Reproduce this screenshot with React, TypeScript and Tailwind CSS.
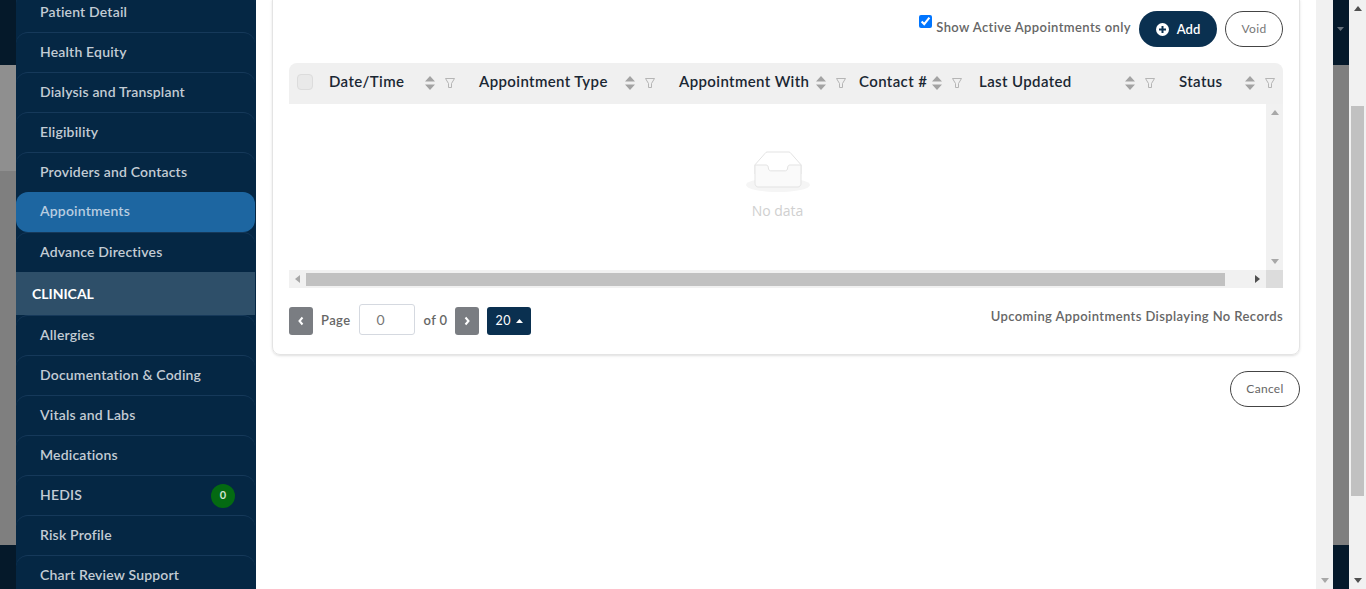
import React from "react";

const font = "font-['Lato','Liberation_Sans',sans-serif]";

const topItems = [
    "Patient Detail",
    "Health Equity",
    "Dialysis and Transplant",
    "Eligibility",
    "Providers and Contacts",
    "Appointments",
    "Advance Directives",
];

const clinicalItems = [
    "Allergies",
    "Documentation & Coding",
    "Vitals and Labs",
    "Medications",
    "HEDIS",
    "Risk Profile",
    "Chart Review Support",
];

const columns = [
    { label: "Date/Time", width: "w-[150px]", pad: "pl-[10px] pr-[14px]" },
    { label: "Appointment Type", width: "w-[200px]", pad: "pl-[10px] pr-[14px]" },
    { label: "Appointment With", width: "w-[181px]", pad: "pl-[10px] pr-[4px]" },
    { label: "Contact #", width: "w-[120px]", pad: "pl-[9px] pr-[10px]" },
    { label: "Last Updated", width: "w-[200px]", pad: "pl-[9px] pr-[15px]" },
    { label: "Status", width: "flex-1", pad: "pl-[9px] pr-[8px]" },
];

const SortIcon = () => (
    <svg width="10" height="14" viewBox="0 0 10 14" className="shrink-0">
        <path d="M5 0 L10 5.5 H0 Z M5 14 L0 8.5 H10 Z" fill="#a3a3a3" />
    </svg>
);

const FilterIcon = () => (
    <svg width="10" height="10" viewBox="0 0 10 10" fill="none" className="shrink-0 ml-[10px]">
        <path d="M0.5 0.5 H9.5 L6.5 5.5 V9.5 H3.5 V5.5 Z" stroke="#b5b5b5" strokeWidth="1" />
    </svg>
);

const Arrow = ({ dir, color }: { dir: "up" | "down" | "left" | "right"; color: string }) => {
    const d = {
        up: "M4 1 L8 6 H0 Z",
        down: "M4 7 L0 2 H8 Z",
        left: "M1 4 L6 0 V8 Z",
        right: "M7 4 L2 0 V8 Z",
    }[dir];
    return (
        <svg width="8" height="8" viewBox="0 0 8 8">
            <path d={d} fill={color} />
        </svg>
    );
};

const EmptyIcon = () => (
    <svg width="64" height="41" viewBox="0 0 64 41">
        <g transform="translate(0 1)" fill="none" fillRule="evenodd">
            <ellipse fill="#f5f5f5" cx="32" cy="33" rx="32" ry="7" />
            <g fillRule="nonzero" stroke="#e3e3e3">
                <path d="M55 12.76L44.854 1.258C44.367.474 43.656 0 42.907 0H21.093c-.749 0-1.46.474-1.947 1.257L9 12.761V22h46v-9.24z" />
                <path
                    d="M41.613 15.931c0-1.605.994-2.93 2.227-2.931H55v18.137C55 33.26 53.68 35 52.05 35h-40.1C10.32 35 9 33.259 9 31.137V13h11.16c1.233 0 2.227 1.323 2.227 2.928v.022c0 1.605 1.005 2.901 2.237 2.901h14.752c1.232 0 2.237-1.308 2.237-2.913v-.007z"
                    fill="#fafafa"
                />
            </g>
        </g>
    </svg>
);

const NavRow = ({ label }: { label: string }) => {
    const active = label === "Appointments";
    return (
        <div
            className={
                active
                    ? "h-10 flex items-center pl-6 pr-5 pb-1 rounded-xl bg-[#1d66a1] text-[#b9cde0] text-[14px] font-semibold tracking-[0.18px]"
                    : "h-10 flex items-center justify-between pl-6 pr-5 rounded-xl border-t border-[#16395a] text-[#c3ccd4] text-[14px] font-semibold tracking-[0.18px]"
            }
        >
            <span className={active ? "" : "-mt-0.5"}>{label}</span>
            {label === "HEDIS" && (
                <span className="w-6 h-6 rounded-full bg-[#046a12] text-[#cfe3cf] text-[11px] font-bold flex items-center justify-center">
                    0
                </span>
            )}
        </div>
    );
};

const PageButton = ({ children }: { children: React.ReactNode }) => (
    <button className="w-6 h-7 mt-[3px] rounded-[3px] bg-[#7a7d82] text-white flex items-center justify-center">
        {children}
    </button>
);

const Chevron = ({ left }: { left?: boolean }) => (
    <svg width="8" height="10" viewBox="0 0 8 10" fill="none">
        <path
            d={left ? "M5.5 1.5 L2.5 5 L5.5 8.5" : "M2.5 1.5 L5.5 5 L2.5 8.5"}
            stroke="white"
            strokeWidth="2"
        />
    </svg>
);

export default function App() {
    return (
        <div className={`${font} w-full h-[589px] flex overflow-hidden bg-white`}>
            {/* dimmed page behind the drawer, left */}
            <div className="w-4 shrink-0 flex flex-col">
                <div className="h-[65px] bg-[#05192a]" />
                <div className="h-[106px] bg-[#8f8f8f]" />
                <div className="flex-1 bg-[#7f7f7f]" />
                <div className="h-11 bg-[#05192a]" />
            </div>

            {/* sidebar */}
            <aside className="w-60 shrink-0 bg-[#052744] pr-px">
                <div className="-mt-2">
                    {topItems.map((item) => (
                        <NavRow key={item} label={item} />
                    ))}
                </div>
                <div className="h-[43px] flex items-center pl-4 bg-[#2e4f69] text-white text-[14px] font-bold">
                    CLINICAL
                </div>
                {clinicalItems.map((item) => (
                    <NavRow key={item} label={item} />
                ))}
            </aside>

            {/* main drawer content */}
            <main className="flex-1 min-w-0 px-4">
                <div className="-mt-px rounded-b-lg border border-[#e4e4e4] shadow-sm px-4 pt-[11px] pb-[19px]">
                    <div className="flex items-center justify-end h-9">
                        <label className="flex items-start gap-[4px] mr-2 -mt-[5px] text-[13px] font-semibold text-[#666] tracking-[0.4px]">
                            <input
                                type="checkbox"
                                defaultChecked
                                className="w-[13px] h-[13px] -mt-[3px] m-0 accent-[#0075ff]"
                            />
                            <span className="leading-[18px]">Show Active Appointments only</span>
                        </label>
                        <button className="w-[78px] h-9 pt-px rounded-full bg-[#0a3050] text-white text-[13px] font-semibold flex items-center justify-center gap-2">
                            <svg width="13" height="13" viewBox="0 0 13 13">
                                <circle cx="6.5" cy="6.5" r="6.5" fill="white" />
                                <path d="M6.5 3 V10 M3 6.5 H10" stroke="#0a3050" strokeWidth="2" />
                            </svg>
                            Add
                        </button>
                        <button className="w-[58px] h-9 ml-2 rounded-full border border-[#444] bg-white text-[#777] text-[12px] tracking-[0.3px]">
                            Void
                        </button>
                    </div>

                    {/* table */}
                    <div className="mt-4">
                        <div className="h-[41px] flex bg-[#f0f0f0] rounded-t-lg text-[15px] font-semibold text-[#1a2733] tracking-[0.38px]">
                            <div className="w-[30px] shrink-0 flex items-center pl-2">
                                <span className="w-4 h-4 -mt-[3px] rounded-[4px] border border-[#dcdcdc] bg-[#e9e9e9]" />
                            </div>
                            {columns.map((col) => (
                                <div
                                    key={col.label}
                                    className={`${col.width} ${col.pad} shrink-0 pb-[2px] flex items-center`}
                                >
                                    <span className="flex-1 whitespace-nowrap -mt-[2px] mr-[5px]">{col.label}</span>
                                    <SortIcon />
                                    <FilterIcon />
                                </div>
                            ))}
                        </div>
                        <div className="h-[166px] flex">
                            <div className="flex-1 flex flex-col items-center pt-[47px]">
                                <EmptyIcon />
                                <span className="mt-2 text-[14px] text-[#d0d0d0] font-['Open_Sans',sans-serif]">
                                    No data
                                </span>
                            </div>
                            <div className="w-[17px] bg-[#f1f1f1] flex flex-col items-center justify-between py-[5px]">
                                <Arrow dir="up" color="#a8a8a8" />
                                <Arrow dir="down" color="#a8a8a8" />
                            </div>
                        </div>
                        <div className="h-[18px] flex bg-[#f1f1f1]">
                            <div className="w-[17px] flex items-center justify-center">
                                <Arrow dir="left" color="#a8a8a8" />
                            </div>
                            <div className="w-[919px] h-[13px] mt-[3px] bg-[#c1c1c1]" />
                            <div className="flex-1 flex items-center justify-end pr-[5px]">
                                <Arrow dir="right" color="#505050" />
                            </div>
                            <div className="w-[17px] bg-[#dcdcdc]" />
                        </div>
                    </div>

                    {/* pagination */}
                    <div className="mt-4 flex items-start text-[13px] font-semibold text-[#666] tracking-[0.4px]">
                        <PageButton>
                            <Chevron left />
                        </PageButton>
                        <span className="ml-2 mt-[7px]">Page</span>
                        <input
                            readOnly
                            value="0"
                            className="ml-[9px] w-14 h-[31px] rounded-[3px] border border-[#d5d9e0] pl-4 text-[14px] font-normal text-[#777] outline-none"
                        />
                        <span className="ml-2 mt-[7px]">of 0</span>
                        <div className="ml-[7px]">
                            <PageButton>
                                <Chevron />
                            </PageButton>
                        </div>
                        <button className="ml-2 mt-[3px] w-11 h-7 pl-[9px] rounded-[3px] bg-[#0a3050] text-white text-[12.5px] font-normal flex items-center gap-[5px]">
                            20
                            <svg width="7" height="4" viewBox="0 0 7 4">
                                <path d="M3.5 0 L7 4 H0 Z" fill="white" />
                            </svg>
                        </button>
                        <span className="ml-auto mt-[3px]">Upcoming Appointments Displaying No Records</span>
                    </div>
                </div>

                <div className="flex justify-end mt-4">
                    <button className="w-[70px] h-9 rounded-full border border-[#444] bg-white text-[#666] text-[12px] tracking-[0.3px]">
                        Cancel
                    </button>
                </div>
            </main>

            {/* drawer scrollbar */}
            <div className="w-[17px] shrink-0 bg-[#f1f1f1] flex flex-col justify-end items-center pb-[5px]">
                <Arrow dir="down" color="#a8a8a8" />
            </div>

            {/* dimmed page, right */}
            <div className="w-4 shrink-0 flex flex-col">
                <div className="h-[65px] bg-[#05192a] flex items-center justify-center pb-[8px] pr-[2px]">
                    <svg width="7" height="4" viewBox="0 0 7 4">
                        <path d="M0 0 H7 L3.5 4 Z" fill="#66707a" />
                    </svg>
                </div>
                <div className="flex-1 bg-[#7f7f7f]" />
                <div className="h-11 bg-[#05192a]" />
            </div>

            {/* browser scrollbar */}
            <div className="w-[17px] shrink-0 bg-[#f1f1f1] flex flex-col items-center py-[5px]">
                <Arrow dir="up" color="#505050" />
                <div className="w-[13px] h-[390px] mt-[93px] bg-[#c1c1c1]" />
                <div className="mt-auto">
                    <Arrow dir="down" color="#505050" />
                </div>
            </div>
        </div>
    );
}
